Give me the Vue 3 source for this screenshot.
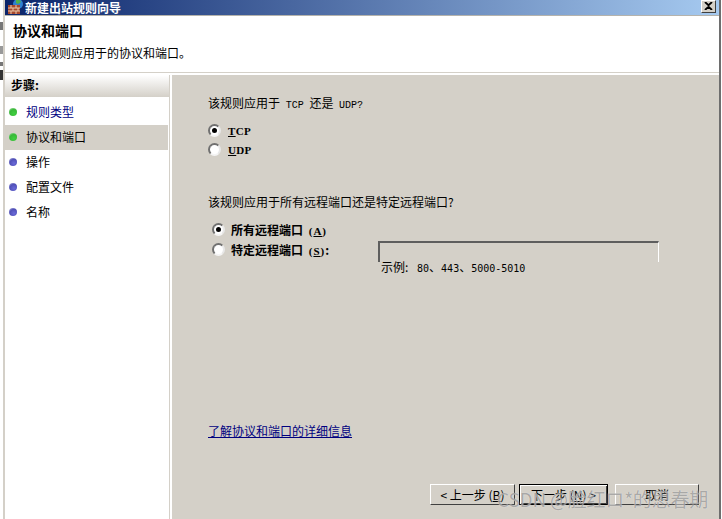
<script setup>
// 向导左侧的步骤
const steps = [
  { name: '规则类型', done: true, link: true },
  { name: '协议和端口', done: true, active: true },
  { name: '操作' },
  { name: '配置文件' },
  { name: '名称' },
];
</script>

<template>
  <div class="window">
    <div class="edge-left"></div>
    <div class="main">
      <div class="titlebar">
        <svg class="app-icon" width="16" height="16" viewBox="0 0 16 16">
          <circle cx="10" cy="5" r="5" fill="#2f7fd0" />
          <path d="M8 1c2-1 4 0 5 2l-3 2-2-1z" fill="#4fb04a" />
          <rect x="0" y="6" width="12" height="9" fill="#a8482c" />
          <path d="M0 9h12M0 12h12M3 6v3M8 6v3M5 9v3M10 9v3M3 12v3M8 12v3" stroke="#e8c8a8" stroke-width="1" />
        </svg>
        <span class="title-text">新建出站规则向导</span>
        <div class="close">
          <svg width="9" height="8" viewBox="0 0 9 8">
            <path d="M1 0l3.500 3.200L8 0M1 8l3.500-3.200L8 8" fill="none" stroke="#000" stroke-width="1.800" />
          </svg>
        </div>
      </div>

      <div class="header">
        <div class="header-title">协议和端口</div>
        <div class="header-sub">指定此规则应用于的协议和端口。</div>
      </div>

      <div class="body">
        <aside class="sidebar">
          <div class="side-head">步骤:</div>
          <ul class="step-list">
            <li v-for="s in steps" :key="s.name" class="step" :class="{ active: s.active }">
              <i class="dot" :class="{ green: s.done }"></i>
              <span :class="{ 'step-link': s.link }">{{ s.name }}</span>
            </li>
          </ul>
        </aside>

        <section class="panel">
          <p class="question">该规则应用于 <span class="lat">TCP</span> 还是 <span class="lat">UDP?</span></p>
          <div class="radio-row first">
            <span class="radio on"></span>
            <b class="lat-b"><u>T</u>CP</b>
          </div>
          <div class="radio-row">
            <span class="radio"></span>
            <b class="lat-b"><u>U</u>DP</b>
          </div>

          <p class="question second">该规则应用于所有远程端口还是特定远程端口?</p>
          <div class="port-group">
            <div class="radio-row wide top">
              <span class="radio on"></span>
              <b>所有远程端口 <span class="lat-b paren">(<u>A</u>)</span></b>
            </div>
            <div class="port-row">
              <div class="radio-row wide port-label">
                <span class="radio"></span>
                <b>特定远程端口 <span class="lat-b paren">(<u>S</u>)</span>:</b>
              </div>
              <div class="port-field">
                <div class="port-input"></div>
                <div class="port-hint">示例: <span class="lat-h">80</span>、<span class="lat-h">443</span>、<span class="lat-h">5000-5010</span></div>
              </div>
            </div>
          </div>

          <a class="more">了解协议和端口的详细信息</a>

          <div class="buttons">
            <button class="btn back">&lt; 上一步 (<u>B</u>)</button>
            <button class="btn next">下一步 (<u>N</u>) &gt;</button>
            <button class="btn cancel">取消</button>
          </div>
        </section>
      </div>
    </div>
    <div class="edge-right"></div>
    <div class="watermark">CSDN @脸红ロ*的思春期</div>
  </div>
</template>

<style>
html, body { margin: 0; background: #fff; }
</style>

<style scoped>
.window {
  position: relative;
  display: flex;
  width: 722px;
  height: 519px;
  overflow: hidden;
  background: #d4d0c8;
  font-family: "Noto Sans CJK SC", "Liberation Sans", sans-serif;
  font-size: 12px;
  color: #000;
}
.edge-left {
  width: 5px;
  flex: none;
  /* 窗口后面露出来的一点文字 */
  background: linear-gradient(180deg, #fff 22px, #777 22px, #777 30px, #fff 30px, #fff 46px, #999 46px, #999 54px, #fff 54px, #fff 62px, #777 62px, #777 66px, #fff 66px, #fff 70px, #333 70px, #333 80px, #fff 80px);
  border-right: 2px solid #d4d0c8;
  box-sizing: border-box;
}
.edge-right {
  width: 3px;
  flex: none;
  background: #6e6e6e;
  border-right: 1px solid #fff;
  box-sizing: border-box;
}
.main {
  flex: 1;
  min-width: 0;
  display: flex;
  flex-direction: column;
}
.titlebar {
  height: 16px;
  flex: none;
  display: flex;
  align-items: center;
  padding: 0 3px;
  background: linear-gradient(90deg, #0a246a, #a6caf0);
  border-bottom: 1px solid #b5b3ac;
  box-sizing: border-box;
}
.app-icon { margin-top: -2px; flex: none; }
.title-text {
  margin-left: 1px;
  font-weight: 700;
  color: #fff;
  line-height: 14px;
}
.close {
  margin-left: auto;
  width: 15px;
  height: 13px;
  margin-top: -3px;
  display: flex;
  align-items: center;
  justify-content: center;
  background: #d4d0c8;
  border: 1px solid;
  border-color: #fff #404040 #404040 #fff;
  box-sizing: border-box;
}
.header {
  height: 57px;
  flex: none;
  background: #fff;
  padding: 4px 0 0 6px;
  box-sizing: border-box;
  border-bottom: 1px solid #d4d0c8;
}
.header-title {
  font-size: 14px;
  font-weight: 700;
  line-height: 20px;
  padding-left: 2px;
}
.header-sub {
  margin-top: 5px;
  line-height: 16px;
}
.body {
  flex: 1;
  min-height: 0;
  display: flex;
  background: #fff;
  padding-top: 2px;
}
.sidebar {
  width: 165px;
  flex: none;
  background: #fff;
  border-right: 1px solid #d4d0c8;
  box-sizing: border-box;
  margin-right: 2px;
}
.side-head {
  height: 22px;
  line-height: 20px;
  padding-left: 6px;
  font-weight: 700;
  background: linear-gradient(180deg, #fff, #d4d0c8);
}
.step-list {
  list-style: none;
  margin: 3px 0 0;
  padding: 0;
}
.step {
  height: 25px;
  display: flex;
  align-items: center;
  padding-left: 4px;
  margin-right: 1px;
}
.step.active { background: #d4d0c8; }
.step span { margin: -2px 0 0 9px; line-height: 25px; }
.step-link { color: #00007f; }
.dot {
  width: 8px;
  height: 8px;
  border-radius: 50%;
  flex: none;
  margin-top: -2px;
  background: radial-gradient(circle at 62% 68%, #6a6ad8, #5050b8 55%, #c4c4e4);
}
.dot.green {
  background: radial-gradient(circle at 60% 70%, #3fd03f, #38b838 55%, #c8ecc8);
}
.panel {
  flex: 1;
  min-width: 0;
  display: flex;
  flex-direction: column;
  background: #d4d0c8;
  padding: 20px 0 0 36px;
  margin-right: -2px;
}
.question {
  margin: 0;
  height: 16px;
  line-height: 16px;
  word-spacing: 3px;
}
.question.second { margin-top: 35px; }
.lat {
  font-family: "Liberation Mono", monospace;
  font-size: 10px;
}
.lat-b {
  font-family: "Liberation Serif", serif;
  font-size: 11px;
  font-weight: 700;
  letter-spacing: 0.3px;
}
.paren { letter-spacing: 1px; }
.lat-h {
  font-family: "DejaVu Sans Mono", monospace;
  font-size: 10px;
}
.radio-row {
  display: flex;
  align-items: center;
  height: 19px;
  gap: 7px;
}
.radio-row.first { margin-top: 10px; }
.radio-row.wide { gap: 6px; height: 21px; word-spacing: 3px; }
.radio-row.top { height: 20px; }
.radio {
  position: relative;
  width: 13px;
  height: 13px;
  flex: none;
  box-sizing: border-box;
  border-radius: 50%;
  background: #fff;
  border: 2px solid;
  border-color: #707070 #e8e8e8 #f4f4f4 #707070;
}
.radio.on::after {
  content: "";
  position: absolute;
  left: 2px;
  top: 2px;
  width: 5px;
  height: 5px;
  border-radius: 50%;
  background: #000;
}
.port-group {
  margin-top: 9px;
  padding-left: 4px;
}
.port-row { display: flex; align-items: flex-start; }
.port-label { width: 166px; flex: none; }
.port-field {
  width: 281px;
  flex: none;
  margin-top: 2px;
}
.port-input {
  height: 21px;
  box-sizing: border-box;
  border-top: 2px solid #5e5e5e;
  border-left: 2px solid #5e5e5e;
  border-right: 1px solid #fff;
}
.port-hint {
  margin: -3px 0 0 3px;
  line-height: 16px;
  height: 16px;
  word-spacing: 6px;
}
.more {
  margin-top: 149px;
  align-self: flex-start;
  line-height: 14px;
  color: #00007f;
  text-decoration: underline;
}
.buttons {
  margin-top: 46px;
  display: flex;
  padding-left: 222px;
}
.btn {
  height: 21px;
  padding: 0;
  font: inherit;
  line-height: 17px;
  color: #000;
  background: #d4d0c8;
  border: 1px solid;
  border-color: #fff #404040 #404040 #fff;
  box-sizing: border-box;
}
.back { width: 85px; }
.next {
  width: 89px;
  margin-left: 4px;
  border-color: #000;
  box-shadow: inset 1px 1px 0 #fff, inset -1px -1px 0 #404040;
}
.cancel { width: 84px; margin-left: 7px; }
.watermark {
  position: absolute;
  left: 497px;
  top: 487px;
  font-size: 19px;
  line-height: 24px;
  letter-spacing: -0.2px;
  white-space: nowrap;
  color: rgba(120, 120, 120, 0.6);
  text-shadow: 0 0 1px rgba(255, 255, 255, 0.8);
  font-family: "Noto Sans CJK SC", "Liberation Sans", sans-serif;
}
</style>
